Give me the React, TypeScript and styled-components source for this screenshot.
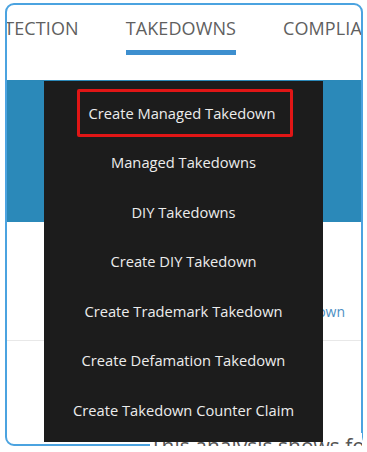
import React from "react"
import styled, { createGlobalStyle } from "styled-components"

const GlobalStyle = createGlobalStyle`
    html, body {
        margin: 0;
        padding: 0;
        background: #ffffff;
        font-family: "Open Sans", "Liberation Sans", sans-serif;
    }
`

const Frame = styled.div`
    position: relative;
    box-sizing: border-box;
    width: 358px;
    height: 443px;
    margin: 3px 0 0 5px;
    border: 2px solid #4ba3e0;
    border-radius: 9px;
    background: #ffffff;
`

const TabWrap = styled.div`
    overflow: hidden;
    border-radius: 7px 7px 0 0;
`

const TabBar = styled.div`
    display: flex;
    gap: 47px;
    height: 75px;
    padding-top: 11px;
    box-sizing: border-box;
    margin-left: -39px;
`

const Tab = styled.div`
    display: flex;
    flex-direction: column;
    flex-shrink: 0;
`

const TabLabel = styled.span`
    font-size: 18px;
    line-height: 24px;
    color: #606060;
    white-space: nowrap;
    letter-spacing: 0.1px;
`

const Underline = styled.div<{ active?: boolean }>`
    height: 5px;
    margin-top: 10px;
    background: ${(props) => (props.active ? "#3d8fcf" : "transparent")};
`

const Banner = styled.div`
    height: 142px;
    background: #2b89b9;
`

const LinkRow = styled.div`
    display: flex;
    justify-content: flex-end;
    padding: 80px 16px 0 0;
    height: 119px;
    box-sizing: border-box;
    border-bottom: 1px solid #e8e8e8;
`

const Link = styled.span`
    font-size: 14px;
    color: #4d8fc4;
`

const Caption = styled.div`
    margin: 92px 0 0 143px;
    width: 212px;
    overflow: hidden;
    white-space: nowrap;
    background: #ffffff;
    font-size: 21px;
    line-height: 26px;
    color: #555555;
`

const Menu = styled.ul`
    position: absolute;
    top: 76px;
    left: 37px;
    width: 279px;
    margin: 0;
    padding: 7px 0;
    list-style: none;
    background: #1c1c1c;
    box-sizing: border-box;
`

const MenuItem = styled.li`
    display: flex;
    align-items: center;
    justify-content: center;
    height: 49.5px;
`

const ItemText = styled.span<{ marked?: boolean }>`
    box-sizing: border-box;
    font-size: 14.7px;
    color: #ececec;
    white-space: nowrap;
    ${(props) =>
        props.marked
            ? `
        border: 3px solid #e01616;
        border-radius: 2px;
        padding: 11px 15px 11px 9px;
        margin-left: 3px;
    `
            : ""}
`

const items = [
    "Create Managed Takedown",
    "Managed Takedowns",
    "DIY Takedowns",
    "Create DIY Takedown",
    "Create Trademark Takedown",
    "Create Defamation Takedown",
    "Create Takedown Counter Claim",
]

function App() {
    return (
        <>
            <GlobalStyle />
            <Frame>
                <TabWrap>
                    <TabBar>
                        <Tab>
                            <TabLabel>PROTECTION</TabLabel>
                            <Underline />
                        </Tab>
                        <Tab>
                            <TabLabel>TAKEDOWNS</TabLabel>
                            <Underline active />
                        </Tab>
                        <Tab>
                            <TabLabel>COMPLIANCE</TabLabel>
                            <Underline />
                        </Tab>
                    </TabBar>
                    <Banner />
                </TabWrap>
                <LinkRow>
                    <Link>View Takedown</Link>
                </LinkRow>
                <Caption>This analysis shows for the selected period</Caption>
                <Menu>
                    {items.map((item, index) => (
                        <MenuItem key={item}>
                            <ItemText marked={index === 0}>{item}</ItemText>
                        </MenuItem>
                    ))}
                </Menu>
            </Frame>
        </>
    )
}

export default App
